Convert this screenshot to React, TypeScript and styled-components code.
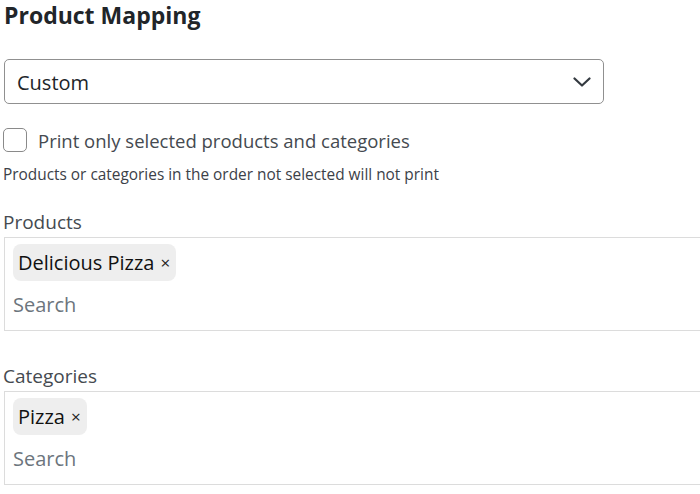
import React from "react";
import styled, { createGlobalStyle } from "styled-components";

const GlobalStyle = createGlobalStyle`
  html, body { margin: 0; padding: 0; background: #ffffff; }
  body {
    font-family: "Open Sans", "Noto Sans", sans-serif;
    color: #212529;
    overflow: hidden;
  }
  * { box-sizing: border-box; }
`;

const Page = styled.div`
  width: 700px;
  height: 494px;
  padding: 0 0 0 4px;
  overflow: hidden;
`;

const Heading = styled.h2`
  margin: 0;
  height: 31px;
  font-size: 23px;
  line-height: 31px;
  letter-spacing: 0;
  font-weight: 700;
  color: #212529;
`;

const SelectBox = styled.div`
  margin-top: 28px;
  width: 600px;
  height: 45px;
  border: 1px solid #909090;
  border-radius: 5px;
  display: flex;
  align-items: center;
  justify-content: space-between;
  padding: 1px 12px 0 12px;
  font-size: 20px;
  color: #212529;
`;

const CheckRow = styled.label`
  margin-top: 23px;
  margin-left: -1px;
  display: flex;
  align-items: center;
  gap: 11px;
  height: 26px;
  font-size: 18.5px;
  color: #454a50;
`;

const CheckBox = styled.span`
  width: 24px;
  height: 24px;
  border: 1px solid #8a8a8a;
  border-radius: 5px;
  background: #fff;
  flex: none;
`;

const Help = styled.div`
  margin-top: 10px;
  margin-left: -1px;
  font-size: 15.4px;
  line-height: 24px;
  color: #3c4148;
`;

const FieldLabel = styled.div<{ $top: number }>`
  margin-top: ${(p) => p.$top}px;
  margin-left: -1px;
  font-size: 19px;
  line-height: 26px;
  color: #454a50;
`;

const MultiBox = styled.div`
  margin-top: 2px;
  width: 700px;
  height: 94px;
  border: 1px solid #dcdcdc;
  padding: 6px 8px 0 8px;
  display: flex;
  flex-direction: column;
  align-items: flex-start;
`;

const Chip = styled.span`
  display: inline-flex;
  align-items: center;
  gap: 6px;
  height: 37px;
  padding: 0 6px 0 5px;
  border-radius: 8px;
  background: #eeeeee;
  font-size: 20px;
  color: #111;
`;

const Remove = styled.span`
  font-size: 17px;
  color: #222;
`;

const SearchText = styled.div`
  margin-top: 6px;
  height: 36px;
  line-height: 36px;
  font-size: 20px;
  color: #6c757d;
`;

const Chevron = () => (
  <svg width="18" height="10" viewBox="0 0 18 10" fill="none">
    <path d="M1.5 1.5 L9 8.5 L16.5 1.5" stroke="#343a40" strokeWidth="2.2" strokeLinecap="round" strokeLinejoin="round" />
  </svg>
);

export default function App() {
  return (
    <Page>
      <GlobalStyle />
      <Heading>Product Mapping</Heading>
      <SelectBox>
        <span>Custom</span>
        <Chevron />
      </SelectBox>
      <CheckRow>
        <CheckBox />
        Print only selected products and categories
      </CheckRow>
      <Help>Products or categories in the order not selected will not print</Help>
      <FieldLabel $top={22}>Products</FieldLabel>
      <MultiBox>
        <Chip>
          Delicious Pizza <Remove>×</Remove>
        </Chip>
        <SearchText>Search</SearchText>
      </MultiBox>
      <FieldLabel $top={32}>Categories</FieldLabel>
      <MultiBox>
        <Chip>
          Pizza <Remove>×</Remove>
        </Chip>
        <SearchText>Search</SearchText>
      </MultiBox>
    </Page>
  );
}
